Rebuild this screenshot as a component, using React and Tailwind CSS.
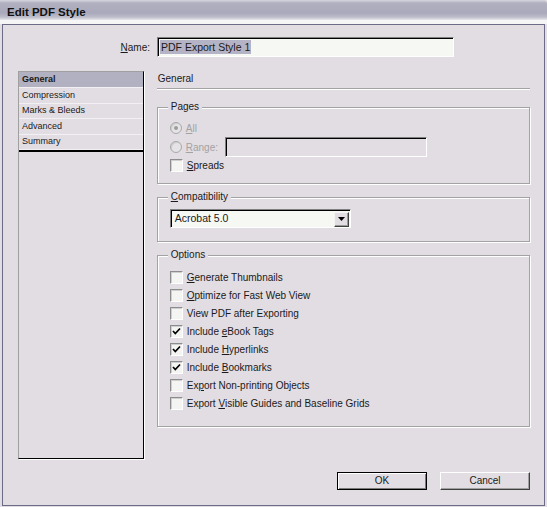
import React from "react";

const Check = ({ checked }) => (
  <span className="w-[13px] h-[13px] shrink-0 border border-t-[#8c8c8c] border-l-[#8c8c8c] border-r-white border-b-white bg-[#f4f5f2] shadow-[inset_1px_1px_0_#cfcfcf] flex items-center justify-center">
    {checked && (
      <svg width="9" height="9" viewBox="0 0 9 9">
        <path d="M1 4 L3.3 6.5 L8 1.5" stroke="#000" strokeWidth="1.7" fill="none" />
      </svg>
    )}
  </span>
);

const Radio = ({ on }) => (
  <span className="w-[12px] h-[12px] shrink-0 rounded-full border border-[#a8a8a8] bg-[#e6e3e7] shadow-[inset_1px_1px_0_#cdcdcd] flex items-center justify-center">
    {on && <span className="w-[4px] h-[4px] rounded-full bg-[#9c9c9c]" />}
  </span>
);

const Group = ({ label, className, children }) => (
  <div
    className={
      "relative border border-[#a3a3a3] shadow-[1px_1px_0_#ffffff,inset_1px_1px_0_#ffffff] " +
      className
    }
  >
    <span className="absolute -top-[7px] left-[10px] px-[3px] bg-[#e2dde3] leading-[12px] text-[10px] text-[#1a1a1a]">
      {label}
    </span>
    {children}
  </div>
);

const options = [
  { on: false, label: <><u>G</u>enerate Thumbnails</> },
  { on: false, label: <><u>O</u>ptimize for Fast Web View</> },
  { on: false, label: <>View PDF after Exporting</> },
  { on: true, label: <>Include <u>e</u>Book Tags</> },
  { on: true, label: <>Include <u>H</u>yperlinks</> },
  { on: true, label: <>Include <u>B</u>ookmarks</> },
  { on: false, label: <>Ex<u>p</u>ort Non-printing Objects</> },
  { on: false, label: <>Export <u>V</u>isible Guides and Baseline Grids</> },
];

const sections = [
  { name: "General", h: "h-[16px]" },
  { name: "Compression", h: "h-[16px]" },
  { name: "Marks & Bleeds", h: "h-[15px]" },
  { name: "Advanced", h: "h-[16px]" },
  { name: "Summary", h: "h-[15px]" },
];

export default function App() {
  return (
    <div className="w-[547px] h-[507px] bg-[#e2dde3] flex flex-col font-['Liberation_Sans',Arial,sans-serif] text-[#1a1a1a] overflow-hidden">
      {/* title bar */}
      <div className="h-[20px] shrink-0 rounded-tr-[4px] bg-[linear-gradient(to_bottom,#d6d6de_0px,#b0b0c0_3px,#a9a9bb_13px,#bcbcca_17px,#e6e6ec_20px)] flex items-end pl-[7px] pb-[1px]">
        <span className="text-[11.5px] font-bold leading-[14px] text-[#111]">Edit PDF Style</span>
      </div>
      <div className="h-[4px] shrink-0 bg-[#f5f5f6]" />

      {/* dialog body */}
      <div className="flex-1 mx-[2px] mb-[1px] border border-[#6b6b85] flex flex-col pl-[15px] pr-[14px]">
        {/* name row */}
        <div className="flex items-center mt-[12px]">
          <span className="w-[132px] text-right text-[10px]">
            <u>N</u>ame:
          </span>
          <div className="ml-[7px] w-[297px] h-[20px] border border-t-[#808080] border-l-[#808080] border-r-white border-b-white shadow-[inset_1px_1px_0_#000] bg-[#f6f8f4] flex items-center pl-[2px]">
            <span className="bg-[#b5b4c6] text-[10.5px] leading-[14px] px-[1px]">PDF Export Style 1</span>
          </div>
        </div>

        {/* main */}
        <div className="flex mt-[14px] gap-[13px]">
          <div className="w-[126px] h-[388px] border border-t-[#a0a0a0] border-l-[#a0a0a0] border-r-black border-b-black shadow-[1px_1px_0_#ffffff] flex flex-col">
            {sections.map((s, i) => (
              <div
                key={s.name}
                className={
                  (i === 0
                    ? "border-b border-[#f2f0f2] bg-[#b2b1c2] font-bold text-[9px] pl-[3px] flex items-center "
                    : "border-b border-[#f2f0f2] text-[9px] pl-[3px] flex items-center ") + s.h
                }
              >
                {s.name}
              </div>
            ))}
            <div className="h-[2px] bg-black" />
          </div>

          <div className="w-[374px] flex flex-col">
            <div className="h-[16px] text-[10px] leading-[16px] pl-[1px]">General</div>
            <div className="h-[1px] bg-[#a3a3a3] mt-[1px]" />
            <div className="h-[1px] bg-white" />

            <Group label="Pages" className="mt-[17px] w-[373px] h-[77px] pl-[12px] pt-[13px]">
              <div className="flex flex-col text-[10px] text-[#a2a2a2]">
                <div className="h-[14px] flex items-center gap-[4px]">
                  <Radio on />
                  <span><u>A</u>ll</span>
                </div>
                <div className="h-[20px] mt-[2px] flex items-center gap-[4px]">
                  <Radio />
                  <span className="w-[35px]"><u>R</u>ange:</span>
                  <div className="w-[202px] h-[20px] border border-t-[#808080] border-l-[#808080] border-r-white border-b-white shadow-[inset_1px_1px_0_#000] bg-[#e2dde3]" />
                </div>
                <div className="h-[14px] mt-[1px] flex items-center gap-[4px] text-[#1a1a1a]">
                  <Check />
                  <span><u>S</u>preads</span>
                </div>
              </div>
            </Group>

            <Group label={<><u>C</u>ompatibility</>} className="mt-[13px] w-[373px] h-[45px] pl-[12px] pt-[11px]">
              <div className="w-[181px] h-[19px] border border-t-[#808080] border-l-[#808080] border-r-white border-b-white shadow-[inset_1px_1px_0_#000] bg-[#f6f8f4] flex items-center">
                <span className="flex-1 text-[10.5px] pl-[4px] pt-[1px]">Acrobat 5.0</span>
                <span className="w-[15px] h-[15px] mr-[1px] mt-[1px] border border-t-[#f4f4f4] border-l-[#f4f4f4] border-r-[#404040] border-b-[#404040] shadow-[inset_-1px_-1px_0_#9a9a9a] bg-[#e2dde3] flex items-center justify-center">
                  <svg width="7" height="4" viewBox="0 0 7 4">
                    <path d="M0 0 H7 L3.5 4 Z" fill="#000" />
                  </svg>
                </span>
              </div>
            </Group>

            <Group label="Options" className="mt-[13px] w-[373px] h-[172px] pl-[12px] pt-[12px]">
              <div className="flex flex-col">
                {options.map((o, i) => (
                  <div key={i} className="h-[18px] flex items-center gap-[4px] text-[10px]">
                    <Check checked={o.on} />
                    <span>{o.label}</span>
                  </div>
                ))}
              </div>
            </Group>
          </div>
        </div>

        {/* buttons */}
        <div className="flex justify-end gap-[13px] mt-[13px]">
          <button className="w-[90px] h-[18px] border border-black bg-[#e2dde3] shadow-[inset_1px_1px_0_#ffffff,inset_-1px_-1px_0_#7a7a7a] text-[10px] leading-[16px] text-center">
            OK
          </button>
          <button className="w-[90px] h-[18px] border border-t-white border-l-white border-r-[#404040] border-b-[#404040] shadow-[inset_-1px_-1px_0_#a0a0a0] bg-[#e2dde3] text-[10px] leading-[16px] text-center">
            Cancel
          </button>
        </div>
      </div>
    </div>
  );
}
